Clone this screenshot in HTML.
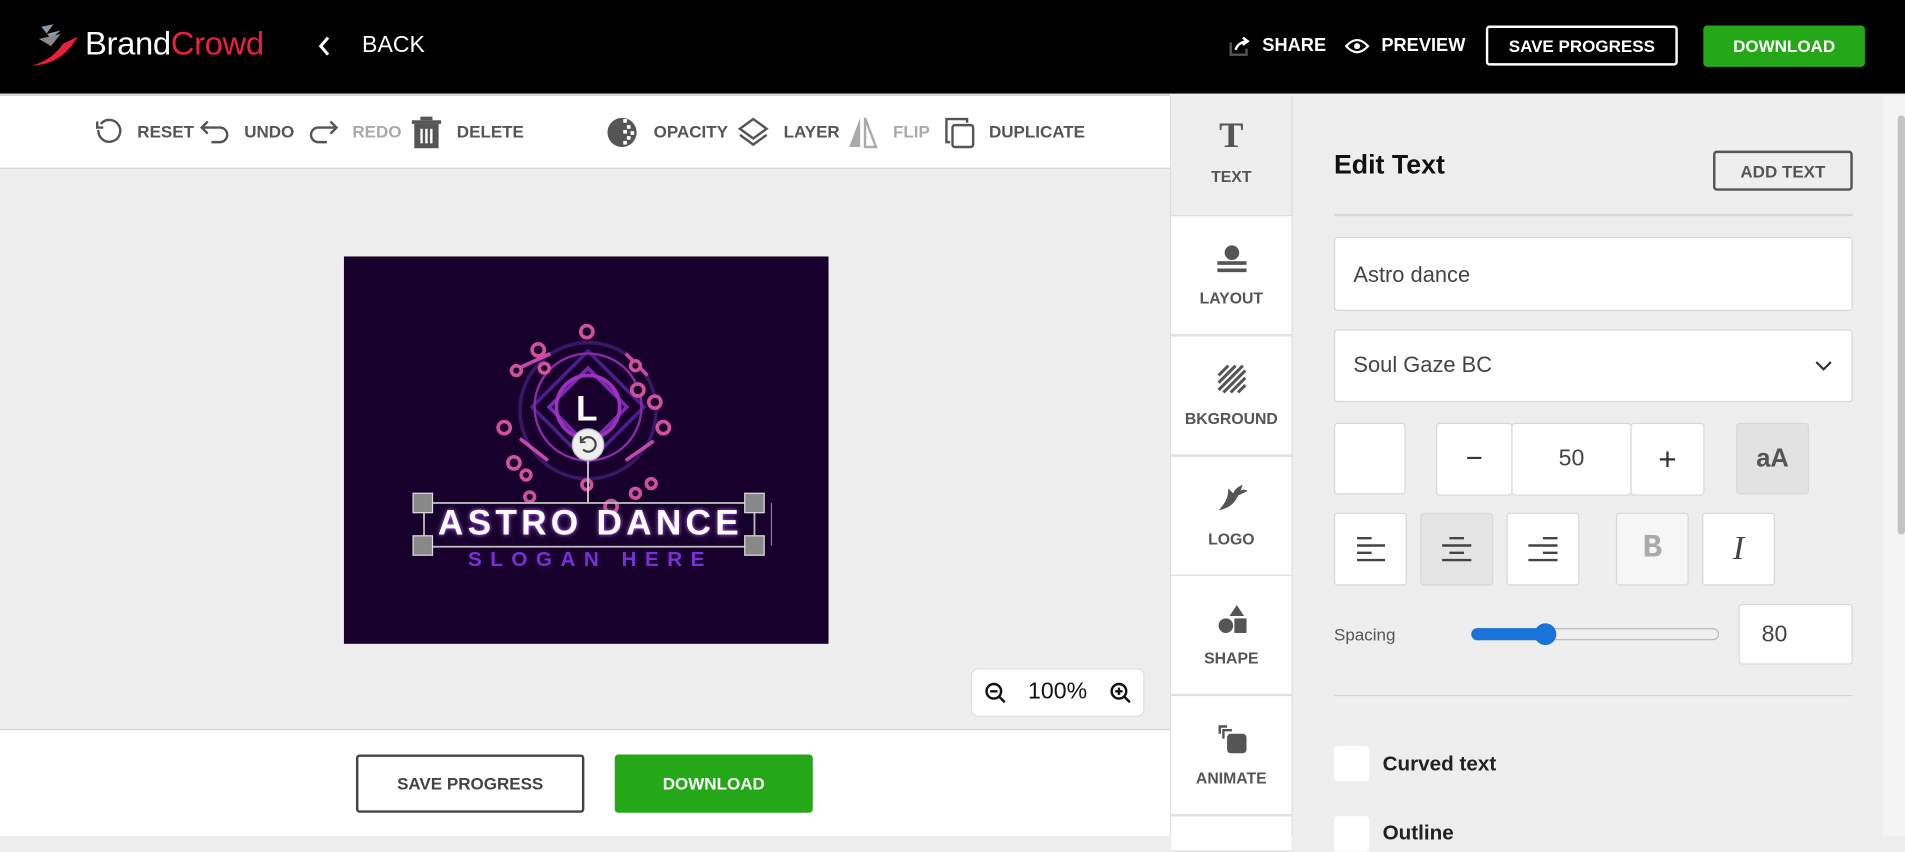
<!DOCTYPE html>
<html><head><meta charset="utf-8">
<style>
*{box-sizing:border-box;margin:0;padding:0}
html,body{width:1905px;height:836px;overflow:hidden;background:#eee}
#w{position:absolute;left:0;top:0;width:1568px;height:688px;transform:scale(1.21492);transform-origin:0 0;font-family:"Liberation Sans",sans-serif;color:#333}
.a{position:absolute}
.hdr{left:0;top:0;width:1568px;height:77px;background:#000}
.ht{color:#fff;font-weight:bold;font-size:15px;top:29px}
.tb{left:0;top:77px;width:963px;height:62px;background:#fff;border-top:2px solid #d5d5d5;border-bottom:1px solid #d5d5d5}
.ti{top:100px;font-size:14px;font-weight:bold;color:#555}
.ic{stroke:#555;fill:none;stroke-width:2}
.tab{left:964px;width:99px;height:99px;background:#fff;border-bottom:1px solid #ddd;border-top:1px solid #ddd;text-align:center;font-size:13px;font-weight:bold;color:#555}
.tab span{position:absolute;left:0;right:0;top:60px}
.box{background:#fff;border:1px solid #d8d8d8;border-radius:3px}
.btn{display:flex;align-items:center;justify-content:center}
</style></head><body><div id="w">
<div class="a hdr"></div>
<svg class="a" style="left:24px;top:20px" width="44" height="38" viewBox="0 0 44 38"><path d="M10 2 L20 0 L14 8 L26 5 L18 12Z" fill="#8a9aa8"/><path d="M8 12 L26 8 L18 18Z" fill="#888"/><path d="M2 34 Q18 30 28 16 L40 10 Q32 24 20 30 Q10 34 2 34Z" fill="#e8213c"/></svg>
<div class="a" style="left:70px;top:21px;font-size:27px;color:#fff;letter-spacing:-0.3px">Brand<span style="color:#e8213c">Crowd</span></div>
<svg class="a" style="left:261px;top:29px" width="12" height="18"><path d="M9 2 L3 9 L9 16" stroke="#fff" stroke-width="2.5" fill="none"/></svg>
<div class="a ht" style="left:298px;font-size:19px;top:27px;font-weight:normal">BACK</div>
<svg class="a" style="left:1011px;top:29px" width="18" height="18"><path d="M2 6 V16 H15 V11" class="ic" stroke="#fff"/><path d="M6 12 Q8 6 15 5 M12 2 L16 5 L12 8" stroke="#fff" stroke-width="2" fill="none"/></svg>
<div class="a ht" style="left:1039px">SHARE</div>
<svg class="a" style="left:1107px;top:30px" width="20" height="16"><path d="M1 8 Q10 -2 19 8 Q10 18 1 8Z" stroke="#fff" stroke-width="1.8" fill="none"/><circle cx="10" cy="8" r="2.5" fill="#fff"/></svg>
<div class="a ht" style="left:1137px">PREVIEW</div>
<div class="a btn" style="left:1223px;top:21px;width:158px;height:33px;border:2px solid #fff;border-radius:3px;color:#fff;font-weight:bold;font-size:14px">SAVE PROGRESS</div>
<div class="a btn" style="left:1402px;top:21px;width:133px;height:34px;background:#24a817;border-radius:3px;color:#fff;font-weight:bold;font-size:14px">DOWNLOAD</div>

<div class="a tb"></div>
<svg class="a" style="left:77px;top:97px" width="24" height="24"><path d="M6 5 A9 9 0 1 1 4 10" class="ic"/><path d="M3 3 V8 H8" class="ic"/></svg>
<div class="a ti" style="left:113px">RESET</div>
<svg class="a" style="left:164px;top:97px" width="26" height="24"><path d="M7 3 L2 8 L7 13 M2 8 H17 A5 5 0 0 1 17 20 H10" class="ic"/></svg>
<div class="a ti" style="left:201px">UNDO</div>
<svg class="a" style="left:253px;top:97px" width="26" height="24"><path d="M19 3 L24 8 L19 13 M24 8 H9 A5 5 0 0 0 9 20 H16" class="ic" stroke="#aaa"/></svg>
<div class="a ti" style="left:290px;color:#aaa">REDO</div>
<svg class="a" style="left:338px;top:95px" width="26" height="28"><rect x="3" y="7" width="20" height="20" fill="#555"/><rect x="1" y="4" width="24" height="3" fill="#555"/><rect x="8" y="1" width="10" height="3" fill="#555"/><rect x="8" y="11" width="2" height="12" fill="#fff"/><rect x="12" y="11" width="2" height="12" fill="#fff"/><rect x="16" y="11" width="2" height="12" fill="#fff"/></svg>
<div class="a ti" style="left:376px">DELETE</div>
<svg class="a" style="left:499px;top:96px" width="26" height="26"><circle cx="13" cy="13" r="12" fill="#555"/><rect x="14" y="2" width="3" height="3" fill="#fff"/><rect x="17" y="7" width="3" height="3" fill="#fff"/><rect x="14" y="11" width="3" height="3" fill="#fff"/><rect x="20" y="12" width="3" height="3" fill="#fff"/><rect x="17" y="16" width="3" height="3" fill="#fff"/><rect x="14" y="20" width="3" height="3" fill="#fff"/></svg>
<div class="a ti" style="left:538px">OPACITY</div>
<svg class="a" style="left:607px;top:96px" width="26" height="26"><path d="M13 2 L24 10 L13 18 L2 10Z" class="ic"/><path d="M2 15 L13 23 L24 15" class="ic"/></svg>
<div class="a ti" style="left:645px">LAYER</div>
<svg class="a" style="left:697px;top:95px" width="26" height="28"><path d="M11 2 L2 26 H11Z" fill="#aaa"/><path d="M15 2 L24 26 H15Z" fill="none" stroke="#aaa" stroke-width="2"/></svg>
<div class="a ti" style="left:735px;color:#aaa">FLIP</div>
<svg class="a" style="left:776px;top:95px" width="28" height="28"><path d="M6 22 H3 V3 H20 V6" class="ic"/><rect x="8" y="8" width="17" height="18" rx="2" class="ic"/></svg>
<div class="a ti" style="left:814px">DUPLICATE</div>

<svg class="a" style="left:283px;top:211px" width="399" height="319" viewBox="0 0 399 319">
<rect width="399" height="319" fill="#17002c"/>
<defs><filter id="g"><feGaussianBlur stdDeviation="2"/></filter></defs>
<g fill="none" stroke-width="3">
<circle cx="201" cy="127" r="56" stroke="#3a1766"/>
<path d="M201 78 L247 124 L201 170 L155 124Z" stroke="#4a1d8a"/>
<path d="M201 92 L233 124 L201 156 L169 124Z" stroke="#7a2ab0"/>
<circle cx="201" cy="124" r="26" stroke="#a030c0"/>
<circle cx="201" cy="124" r="44" stroke="#8a2aa8" stroke-width="2"/>
<g stroke="#c04aa8"><path d="M170 80 L142 93"/><path d="M232 80 L250 98"/><path d="M232 168 L255 152"/><path d="M168 168 L145 150"/></g>
</g>
<g fill="#17002c" stroke="#d0509a" stroke-width="3">
<circle cx="200" cy="62" r="5"/><circle cx="160" cy="77" r="5"/><circle cx="142" cy="94" r="4"/><circle cx="165" cy="92" r="4"/><circle cx="132" cy="141" r="5"/><circle cx="140" cy="170" r="5"/><circle cx="150" cy="180" r="4"/><circle cx="153" cy="198" r="4"/><circle cx="200" cy="188" r="4"/><circle cx="220" cy="206" r="5"/><circle cx="240" cy="195" r="4"/><circle cx="253" cy="187" r="4"/><circle cx="263" cy="141" r="5"/><circle cx="256" cy="120" r="5"/><circle cx="242" cy="110" r="5"/><circle cx="240" cy="90" r="4"/>
</g>
<text x="200" y="135" font-family="Liberation Sans" font-weight="bold" font-size="29" fill="#fff" text-anchor="middle">L</text>
<line x1="201" y1="165" x2="201" y2="203" stroke="#ccc" stroke-width="1.5"/>
<circle cx="201" cy="155" r="13" fill="#eee" stroke="#bbb"/>
<path d="M196 152 A6 6 0 1 1 197 159" stroke="#444" stroke-width="1.8" fill="none"/><path d="M195 148 V153 H199" stroke="#444" stroke-width="1.5" fill="none"/>
<rect x="66" y="203" width="272" height="36" fill="none" stroke="#bbb" stroke-width="1.5"/>
<text x="203" y="229" font-family="Liberation Sans" font-weight="bold" font-size="29" fill="#c060ff" filter="url(#g)" text-anchor="middle" letter-spacing="3.5">ASTRO DANCE</text>
<text x="203" y="229" font-family="Liberation Sans" font-weight="bold" font-size="29" fill="#fff" text-anchor="middle" letter-spacing="3.5">ASTRO DANCE</text>
<text x="203" y="255" font-family="Liberation Sans" font-weight="bold" font-size="17" fill="#7a30d8" text-anchor="middle" letter-spacing="7">SLOGAN HERE</text>
<g fill="#888" stroke="#ddd"><rect x="57" y="195" width="16" height="16"/><rect x="57" y="230" width="16" height="16"/><rect x="330" y="195" width="16" height="16"/><rect x="330" y="230" width="16" height="16"/></g>
<line x1="352" y1="203" x2="352" y2="238" stroke="#888"/>
</svg>
<div class="a btn" style="left:799px;top:550px;width:143px;height:40px;background:#fff;border:1px solid #ddd;border-radius:6px;font-size:19px;color:#111">100%</div>
<svg class="a" style="left:810px;top:561px" width="20" height="20"><circle cx="8" cy="8" r="6" fill="none" stroke="#111" stroke-width="2"/><path d="M5 8 H11 M12 12 L17 17" stroke="#111" stroke-width="2"/></svg>
<svg class="a" style="left:913px;top:561px" width="20" height="20"><circle cx="8" cy="8" r="6" fill="none" stroke="#111" stroke-width="2"/><path d="M5 8 H11 M8 5 V11 M12 12 L17 17" stroke="#111" stroke-width="2"/></svg>
<div class="a" style="left:0;top:600px;width:963px;height:88px;background:#fff;border-top:1px solid #d5d5d5"></div>
<div class="a btn" style="left:293px;top:621px;width:188px;height:48px;border:2px solid #444;border-radius:3px;font-weight:bold;font-size:14px;color:#444">SAVE PROGRESS</div>
<div class="a btn" style="left:506px;top:621px;width:163px;height:48px;background:#24a817;border-radius:3px;font-weight:bold;font-size:14px;color:#fff">DOWNLOAD</div>

<div class="a" style="left:963px;top:79px;width:101px;height:609px;background:#eee;border-left:1px solid #ddd;border-right:1px solid #ddd"></div>
<div class="a tab" style="top:79px;background:#eee;border-top:none"><span style="top:59px">TEXT</span><div class="a" style="left:0;right:0;top:16px;font-family:'Liberation Serif',serif;font-size:30px;color:#555">T</div></div>
<div class="a tab" style="top:177px"><span>LAYOUT</span><svg class="a" style="left:37px;top:24px" width="26" height="24"><circle cx="13" cy="6" r="6" fill="#555"/><rect x="1" y="13" width="24" height="3" fill="#555"/><rect x="1" y="19" width="24" height="3" fill="#555"/></svg></div>
<div class="a tab" style="top:276px"><span>BKGROUND</span><svg class="a" style="left:38px;top:23px" width="24" height="24"><path d="M1 9 L9 1 M1 15 L15 1 M1 21 L21 1 M5 23 L23 5 M11 23 L23 11 M17 23 L23 17" stroke="#555" stroke-width="2.5"/></svg></div>
<div class="a tab" style="top:375px"><span>LOGO</span><svg class="a" style="left:37px;top:22px" width="28" height="24"><path d="M2 22 Q14 20 18 10 L26 6 Q22 4 20 6 L22 1 Q16 3 14 8 L10 4 Q10 10 8 14 Q6 18 2 22Z" fill="#555"/></svg></div>
<div class="a tab" style="top:473px"><span>SHAPE</span><svg class="a" style="left:38px;top:23px" width="26" height="26"><path d="M16 1 L22 10 H10Z" fill="#555"/><circle cx="7" cy="18" r="6" fill="#555"/><rect x="14" y="12" width="10" height="12" fill="#555"/></svg></div>
<div class="a tab" style="top:572px"><span>ANIMATE</span><svg class="a" style="left:37px;top:22px" width="28" height="28"><path d="M3 9 V3 H9" stroke="#555" stroke-width="2" fill="none"/><path d="M6 13 V6 H13" stroke="#555" stroke-width="2" fill="none"/><rect x="9" y="9" width="16" height="16" rx="3" fill="#555"/></svg></div>
<div class="a tab" style="top:671px;height:30px"></div>

<div class="a" style="left:1550px;top:79px;width:18px;height:609px;background:#f4f4f4"></div>
<div class="a" style="left:1562px;top:95px;width:6px;height:345px;background:#c4c4c4;border-radius:3px"></div>
<div class="a" style="left:1098px;top:123px;font-size:22px;font-weight:bold;color:#111">Edit Text</div>
<div class="a btn" style="left:1410px;top:124px;width:115px;height:33px;border:2px solid #555;border-radius:3px;font-size:14px;color:#555;font-weight:bold">ADD TEXT</div>
<div class="a" style="left:1098px;top:176px;width:427px;height:2px;background:#d8d8d8"></div>
<div class="a box" style="left:1098px;top:195px;width:427px;height:61px;padding:20px 15px;font-size:18px;color:#444">Astro dance</div>
<div class="a box" style="left:1098px;top:271px;width:427px;height:60px;padding:18px 15px;font-size:18px;color:#444">Soul Gaze BC</div>
<svg class="a" style="left:1494px;top:296px" width="14" height="10"><path d="M1 2 L7 8 L13 2" stroke="#333" stroke-width="1.8" fill="none"/></svg>
<div class="a box" style="left:1098px;top:348px;width:59px;height:59px"></div>
<div class="a box btn" style="left:1182px;top:348px;width:63px;height:60px;font-size:24px">−</div>
<div class="a box btn" style="left:1244px;top:348px;width:99px;height:60px;font-size:19px;color:#444">50</div>
<div class="a box btn" style="left:1342px;top:348px;width:61px;height:60px;font-size:26px">+</div>
<div class="a box btn" style="left:1429px;top:348px;width:60px;height:59px;background:#e2e2e2;font-size:21px;font-weight:bold;color:#555">aA</div>
<div class="a box" style="left:1098px;top:422px;width:60px;height:60px"></div>
<div class="a box" style="left:1169px;top:422px;width:60px;height:60px;background:#e4e4e4"></div>
<div class="a box" style="left:1240px;top:422px;width:60px;height:60px"></div>
<svg class="a" style="left:1115px;top:441px" width="28" height="24"><path d="M2 2 H14 M2 8 H25 M2 14 H14 M2 20 H25" stroke="#444" stroke-width="2"/></svg>
<svg class="a" style="left:1185px;top:441px" width="28" height="24"><path d="M8 2 H20 M2 8 H26 M8 14 H20 M2 20 H26" stroke="#444" stroke-width="2"/></svg>
<svg class="a" style="left:1256px;top:441px" width="28" height="24"><path d="M14 2 H26 M2 8 H26 M14 14 H26 M2 20 H26" stroke="#444" stroke-width="2"/></svg>
<div class="a box btn" style="left:1330px;top:422px;width:60px;height:60px;background:#f6f6f6;font-size:27px;font-weight:bold;color:#aaa;font-family:'Liberation Mono',monospace">B</div>
<div class="a box btn" style="left:1401px;top:422px;width:60px;height:60px;font-size:28px;font-style:italic;color:#444;font-family:'Liberation Serif',serif">I</div>
<div class="a" style="left:1098px;top:514px;font-size:14px;color:#555">Spacing</div>
<div class="a" style="left:1211px;top:517px;width:204px;height:10px;border:1px solid #bbb;border-radius:5px;background:#efefef"></div>
<div class="a" style="left:1211px;top:517px;width:64px;height:10px;background:#1a73d9;border-radius:5px"></div>
<div class="a" style="left:1263px;top:513px;width:18px;height:18px;background:#1a73d9;border-radius:50%"></div>
<div class="a box" style="left:1431px;top:497px;width:94px;height:50px;padding:14px 18px;font-size:19px;color:#444">80</div>
<div class="a" style="left:1098px;top:572px;width:427px;height:1px;background:#d8d8d8"></div>
<div class="a" style="left:1098px;top:614px;width:29px;height:29px;background:#fff;border-radius:3px"></div>
<div class="a" style="left:1138px;top:619px;font-size:17px;font-weight:bold;color:#222">Curved text</div>
<div class="a" style="left:1098px;top:672px;width:29px;height:29px;background:#fff;border-radius:3px"></div>
<div class="a" style="left:1138px;top:676px;font-size:17px;font-weight:bold;color:#222">Outline</div>
</div></body></html>
